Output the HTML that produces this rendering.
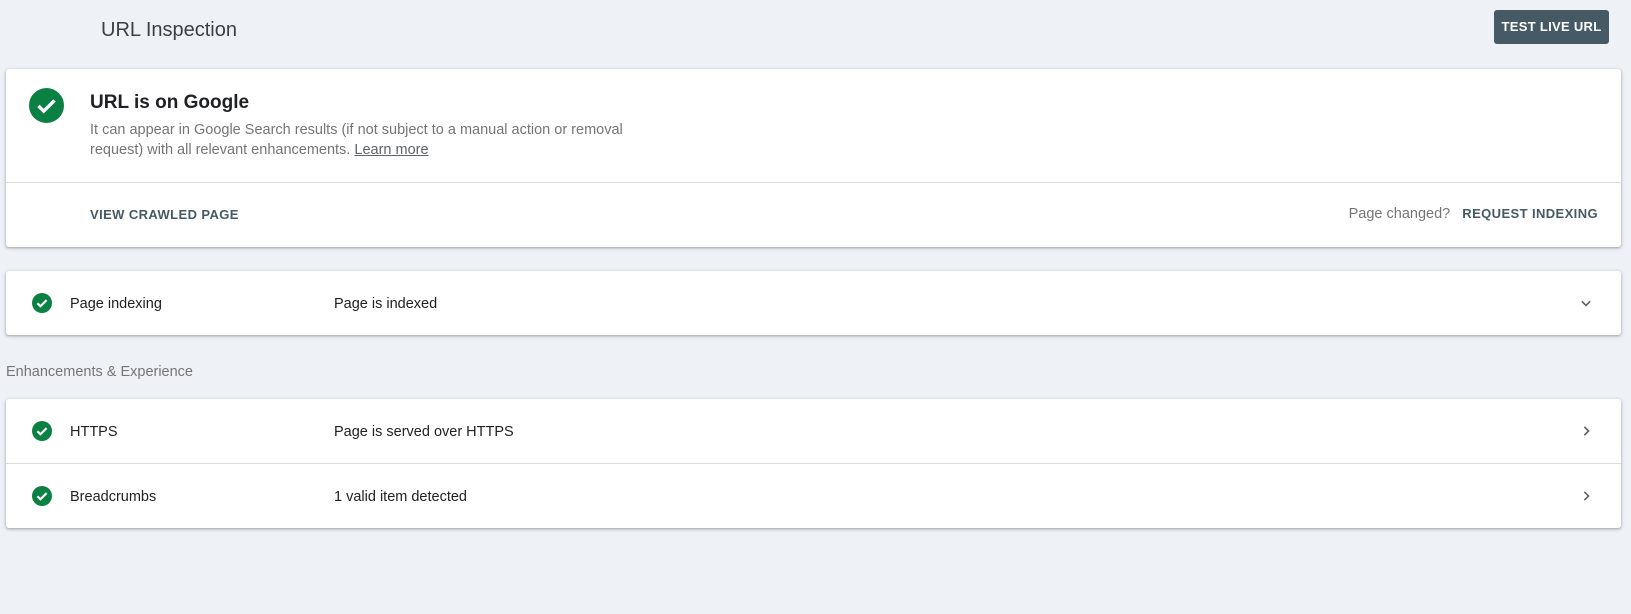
<!DOCTYPE html>
<html><head><style>
body{margin:0;width:1631px;height:614px;background:#eef2f7;font-family:"Liberation Sans",Roboto,sans-serif;position:relative;overflow:hidden}
.a{position:absolute}
.card{position:absolute;left:6px;width:1615px;background:#fff;border-radius:3px;box-shadow:0 1px 2px rgba(60,64,67,.3),0 1px 3px 1px rgba(60,64,67,.15)}
.row{position:absolute;left:0;right:0;height:64px;font-size:14.5px;color:#202124}
.row .lbl{position:absolute;left:64px;top:calc(50% + 1px);transform:translateY(-50%)}
.row .val{position:absolute;left:328px;top:calc(50% + 1px);transform:translateY(-50%)}
.row svg.ic{position:absolute;left:26px;top:22px}
.row svg.ch{position:absolute;right:25px;top:22px}
.bt{font-weight:bold;font-size:13px;color:#455a64;letter-spacing:.4px}
</style></head><body>
<div class="a" style="left:101px;top:19px;font-size:20px;color:#3c4043">URL Inspection</div>
<div class="a" style="left:1494px;top:10px;width:115px;height:34px;background:#455a64;border-radius:3px;color:#fff;font-weight:bold;font-size:13px;line-height:34px;text-align:center;letter-spacing:.3px">TEST LIVE URL</div>

<div class="card" style="top:69px;height:178px">
  <svg class="a" style="left:23px;top:19px" width="35" height="35" viewBox="0 0 24 24"><circle cx="12" cy="12" r="12" fill="#0b8043"/><path d="M6.5 12.3l3.6 3.6 7.4-7.4" fill="none" stroke="#fff" stroke-width="2.3"/></svg>
  <div class="a" style="left:84px;top:23px;font-size:19px;font-weight:bold;color:#202124">URL is on Google</div>
  <div class="a" style="left:84px;top:51px;font-size:14.5px;line-height:20px;color:#757575;width:580px">It can appear in Google Search results (if not subject to a manual action or removal request) with all relevant enhancements. <span style="text-decoration:underline;color:#5f6368">Learn more</span></div>
  <div class="a" style="left:0;right:0;top:113px;border-top:1px solid #dadce0"></div>
  <div class="a bt" style="left:84px;top:138px">VIEW CRAWLED PAGE</div>
  <div class="a" style="right:23px;top:137px;font-size:14.5px;color:#757575">Page changed? &nbsp;&nbsp;<span class="bt">REQUEST INDEXING</span></div>
</div>

<div class="card" style="top:271px;height:64px">
  <div class="row" style="top:0">
    <svg class="ic" width="20" height="20" viewBox="0 0 24 24"><circle cx="12" cy="12" r="12" fill="#0b8043"/><path d="M6.5 12.3l3.6 3.6 7.4-7.4" fill="none" stroke="#fff" stroke-width="2.6"/></svg>
    <span class="lbl">Page indexing</span><span class="val">Page is indexed</span>
    <svg class="ch" width="20" height="20" viewBox="0 0 24 24"><path d="M7 10l5 5 5-5" fill="none" stroke="#5f6368" stroke-width="2"/></svg>
  </div>
</div>

<div class="a" style="left:6px;top:364px;font-size:14.5px;color:#757575">Enhancements &amp; Experience</div>

<div class="card" style="top:399px;height:129px">
  <div class="row" style="top:0">
    <svg class="ic" width="20" height="20" viewBox="0 0 24 24"><circle cx="12" cy="12" r="12" fill="#0b8043"/><path d="M6.5 12.3l3.6 3.6 7.4-7.4" fill="none" stroke="#fff" stroke-width="2.6"/></svg>
    <span class="lbl">HTTPS</span><span class="val">Page is served over HTTPS</span>
    <svg class="ch" width="20" height="20" viewBox="0 0 24 24"><path d="M10 7l5 5-5 5" fill="none" stroke="#5f6368" stroke-width="2"/></svg>
  </div>
  <div class="a" style="left:0;right:0;top:64px;border-top:1px solid #dadce0"></div>
  <div class="row" style="top:65px">
    <svg class="ic" width="20" height="20" viewBox="0 0 24 24"><circle cx="12" cy="12" r="12" fill="#0b8043"/><path d="M6.5 12.3l3.6 3.6 7.4-7.4" fill="none" stroke="#fff" stroke-width="2.6"/></svg>
    <span class="lbl">Breadcrumbs</span><span class="val">1 valid item detected</span>
    <svg class="ch" width="20" height="20" viewBox="0 0 24 24"><path d="M10 7l5 5-5 5" fill="none" stroke="#5f6368" stroke-width="2"/></svg>
  </div>
</div>
</body></html>
